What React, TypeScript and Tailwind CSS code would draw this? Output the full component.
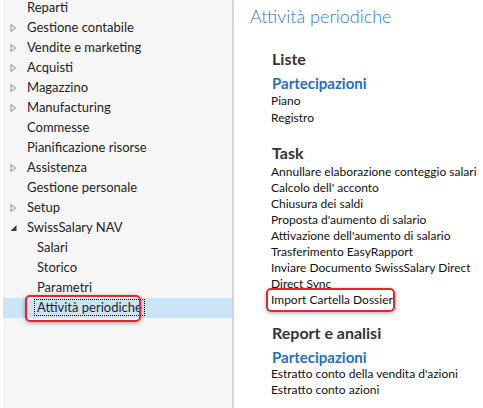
import React from "react";

const font = { fontFamily: "Lato, 'Liberation Sans', sans-serif" };

function Collapsed() {
  return (
    <svg width="8" height="10" viewBox="0 0 8 10" className="shrink-0">
      <path d="M2 1.5 L6.5 5 L2 8.5 Z" fill="none" stroke="#8a8a8a" strokeWidth="1" />
    </svg>
  );
}

function Expanded() {
  return (
    <svg width="8" height="10" viewBox="0 0 8 10" className="shrink-0">
      <path d="M7.5 2 L7.5 8 L1.5 8 Z" fill="#3c3c3c" />
    </svg>
  );
}

type NavItem = { label: string; arrow?: "c" | "e"; sub?: boolean; selected?: boolean };

const nav: NavItem[] = [
  { label: "Reparti" },
  { label: "Gestione contabile", arrow: "c" },
  { label: "Vendite e marketing", arrow: "c" },
  { label: "Acquisti", arrow: "c" },
  { label: "Magazzino", arrow: "c" },
  { label: "Manufacturing", arrow: "c" },
  { label: "Commesse" },
  { label: "Pianificazione risorse" },
  { label: "Assistenza", arrow: "c" },
  { label: "Gestione personale" },
  { label: "Setup", arrow: "c" },
  { label: "SwissSalary NAV", arrow: "e" },
  { label: "Salari", sub: true },
  { label: "Storico", sub: true },
  { label: "Parametri", sub: true },
  { label: "Attività periodiche", sub: true, selected: true },
];

function Item({ children, boxed }: { children: React.ReactNode; boxed?: boolean }) {
  return (
    <div className="relative h-[16px] leading-[16px] text-[12px] text-[#111] whitespace-nowrap">
      {children}
      {boxed && (
        <div className="absolute left-[-5px] top-[-4px] w-[129px] h-[24px] rounded-[5px] border-2 border-[#e3262b] shadow-[0_1px_4px_rgba(0,0,0,0.35)]" />
      )}
    </div>
  );
}

export default function App() {
  return (
    <div className="w-[483px] h-[408px] flex bg-white overflow-hidden" style={font}>
      <div className="w-[3px] shrink-0" />
      <div className="w-[229px] shrink-0 bg-[#f6f6f6] h-full">
        <div className="-mt-[2px] flex flex-col">
          {nav.map((n) => (
            <div
              key={n.label}
              className={`h-[20px] flex items-center text-[13px] text-[#1e1e1e] whitespace-nowrap ${n.selected ? "bg-[#cce4f7]" : ""}`}
            >
              <div className="w-[24px] shrink-0 flex justify-start pl-[6px]">
                {n.arrow === "c" && <Collapsed />}
                {n.arrow === "e" && <Expanded />}
              </div>
              {n.sub ? (
                <div className="relative ml-[10px]">
                  {n.selected ? (
                    <>
                      <span className="border border-dotted border-black px-[2px] -ml-[3px] leading-[15px] inline-block">
                        {n.label}
                      </span>
                      <div className="absolute left-[-12px] top-[-3px] w-[116px] h-[27px] rounded-[5px] border-2 border-[#e3262b] shadow-[0_1px_4px_rgba(0,0,0,0.35)]" />
                    </>
                  ) : (
                    <span>{n.label}</span>
                  )}
                </div>
              ) : (
                <span>{n.label}</span>
              )}
            </div>
          ))}
        </div>
      </div>
      <div className="w-[2px] shrink-0 bg-[#d4d4d4]" />
      <div className="flex-1 min-w-0 bg-white pl-[16px] pt-[4px] whitespace-nowrap">
        <div className="text-[18px] font-light text-[#2c7bd2] leading-[24px]">Attività periodiche</div>
        <div className="pl-[22px]">
          <div className="mt-[21px] h-[20px] leading-[20px] text-[16px] font-bold text-[#333]">Liste</div>
          <div className="mt-[5px] h-[18px] leading-[18px] text-[15px] font-bold text-[#1f6fc5]">Partecipazioni</div>
          <div className="-ml-[1px]">
            <div className="h-[17px] leading-[17px] text-[12px] text-[#111]">Piano</div>
            <div className="h-[17px] leading-[17px] text-[12px] text-[#111]">Registro</div>
          </div>
          <div className="mt-[17px] h-[20px] leading-[20px] text-[16px] font-bold text-[#333]">Task</div>
          <div className="-ml-[1px] mt-[1px]">
            <Item>Annullare elaborazione conteggio salari</Item>
            <Item>Calcolo dell' acconto</Item>
            <Item>Chiusura dei saldi</Item>
            <Item>Proposta d'aumento di salario</Item>
            <Item>Attivazione dell'aumento di salario</Item>
            <Item>Trasferimento EasyRapport</Item>
            <Item>Inviare Documento SwissSalary Direct</Item>
            <Item>Direct Sync</Item>
            <Item boxed>Import Cartella Dossier</Item>
          </div>
          <div className="mt-[15px] h-[20px] leading-[20px] text-[16px] font-bold text-[#333]">Report e analisi</div>
          <div className="mt-[5px] h-[18px] leading-[18px] text-[15px] font-bold text-[#1f6fc5]">Partecipazioni</div>
          <div className="-ml-[1px]">
            <div className="h-[16px] leading-[16px] text-[12px] text-[#111]">Estratto conto della vendita d'azioni</div>
            <div className="h-[16px] leading-[16px] text-[12px] text-[#111]">Estratto conto azioni</div>
          </div>
        </div>
      </div>
    </div>
  );
}
